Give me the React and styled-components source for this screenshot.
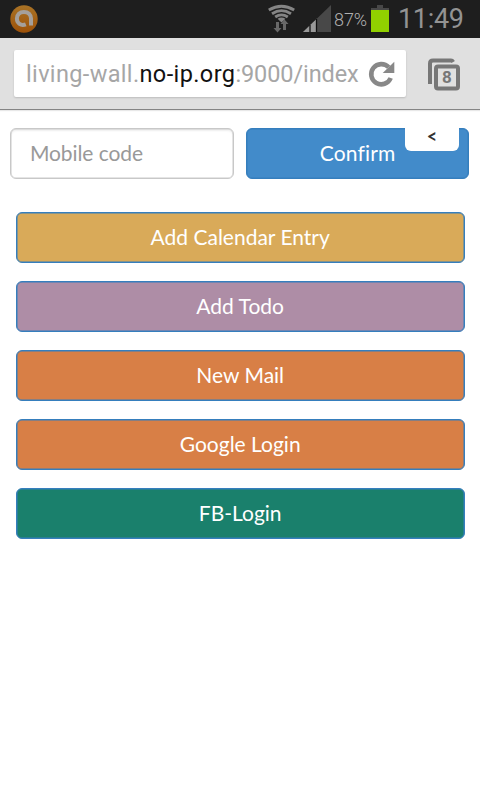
import React from "react";
import styled, { createGlobalStyle } from "styled-components";

const GlobalStyle = createGlobalStyle`
  * { box-sizing: border-box; }
  body { margin: 0; background: #fff; font-family: Lato, sans-serif; font-variant-ligatures: none; }
`;

const Screen = styled.div`
  width: 480px;
  height: 800px;
  overflow: hidden;
  background: #fff;
`;

const StatusBar = styled.header`
  display: flex;
  align-items: flex-start;
  height: 38px;
  padding: 0 15px 0 10px;
  background: #1e1e1e;
  color: #999;
  font-family: Roboto, sans-serif;
`;

const StatusIcon = styled.svg`
  flex: none;
  display: block;
  margin-left: ${(p) => p.$left || 0}px;
`;

const BatteryLevel = styled.span`
  flex: none;
  width: 34px;
  margin-left: 3px;
  padding-top: 9px;
  color: #b0b0b0;
  font-size: 18px;
  font-weight: 300;
  line-height: 22px;
  letter-spacing: -0.1px;
  white-space: nowrap;
`;

const Clock = styled.time`
  margin-left: 9px;
  padding-top: 2px;
  color: #939393;
  font-size: 27px;
  font-weight: 400;
  line-height: 34px;
  letter-spacing: -0.3px;
  white-space: nowrap;
`;

const BrowserBar = styled.div`
  display: flex;
  align-items: flex-start;
  height: 72px;
  padding: 12px 18px 0 14px;
  background: #e0e0e0;
  border-bottom: 1px solid #858585;
  box-shadow: 0 1px 1px #e8e8e8;
`;

const AddressField = styled.div`
  flex: none;
  display: flex;
  align-items: center;
  width: 392px;
  height: 47px;
  padding: 0 10px 0 12px;
  background: #fff;
  border-radius: 2px;
  box-shadow: 0 1px 2px #bbb;
`;

const Address = styled.span`
  flex: none;
  width: 341px;
  color: #a6a6a6;
  font: 400 23.5px/30px Roboto, sans-serif;
  letter-spacing: 0.35px;
  white-space: nowrap;
`;

const Host = styled.span`
  color: #111;
  letter-spacing: 0.4px;
`;

const UrlPath = styled.span`
  letter-spacing: -0.1px;
`;

const Page = styled.main`
  padding: 18px 10.5px 0 10.4px;
`;

const CodeForm = styled.form`
  position: relative;
  display: flex;
  gap: 12px;
`;

const CodeInput = styled.input`
  width: 223.5px;
  height: 51px;
  padding: 0 18px 2px 18.5px;
  border: 1.5px solid #c8c8c8;
  border-radius: 6px;
  outline: none;
  background: #fff;
  box-shadow: inset 0 0 0 0.5px #ccc, inset 0 2px 2px #eee;
  font: 21px/30px Lato, sans-serif;
  letter-spacing: -0.08px;

  &::placeholder { color: #999; opacity: 1; }
`;

const Button = styled.button`
  display: block;
  width: 100%;
  height: 51px;
  padding: 0 1px 2px 0;
  border: 1px solid #357ebd;
  border-radius: 6px;
  box-shadow: inset 0 0 0 0.5px #357ebd;
  background: ${(p) => p.$color};
  color: #fff;
  font: 21px/30px Lato, sans-serif;
  font-variant-ligatures: none;
`;

const ConfirmButton = styled(Button)`
  width: 223.5px;
  padding-right: 0;
  letter-spacing: 0.15px;
`;

const CollapseTab = styled.button`
  position: absolute;
  top: -3px;
  right: 10.5px;
  width: 54px;
  height: 25.5px;
  padding: 0 0 3px;
  border: 0;
  border-radius: 0 0 6px 6px;
  background: #fff;
  color: #333;
  font: 700 18px/22px Lato, sans-serif;
`;

const ActionList = styled.nav`
  display: grid;
  gap: 18px;
  margin-top: 33px;
  padding: 0 4.5px 0 6px;
`;

const actions = [
  { label: "Add Calendar Entry", color: "#d9aa59" },
  { label: "Add Todo", color: "#ae8da6" },
  { label: "New Mail", color: "#d87f46" },
  { label: "Google Login", color: "#d87f46" },
  { label: "FB-Login", color: "#1a806c" },
];

function AppLogo() {
  return (
    <StatusIcon width="28" height="38" viewBox="0 0 28 38">
      <defs>
        <linearGradient id="amber" x1="0" y1="0" x2="0" y2="1">
          <stop offset="0" stopColor="#a97326" />
          <stop offset="1" stopColor="#9d5108" />
        </linearGradient>
      </defs>
      <circle cx="14" cy="19" r="13.7" fill="url(#amber)" />
      <path d="M15.8 24.3C10.8 26.3 6.9 22.9 6.9 18.6C6.9 14.7 9.9 11.9 13.9 11.9C18.1 11.9 21 14.7 21 18.6V25.5" fill="none" stroke="#a5a09b" strokeWidth="4" />
    </StatusIcon>
  );
}

function WifiIcon() {
  return (
    <StatusIcon $left={230} width="27" height="38" viewBox="0 0 27 38">
      <g fill="none" stroke="#858585" strokeWidth="2.9">
        <path d="M.8 10Q13.5 2.4 26.2 10M4 13.7Q13.5 7.6 23 13.7M7.2 17Q13.5 12.8 19.8 17" />
      </g>
      <path d="M9.6 18.8Q13.5 16.2 17.4 18.8L13.5 22.5Z" fill="#858585" />
      <path d="M8 22h3v6h2.5l-4 4.4L5.5 28H8ZM15 30v-6h-2.5l4-4.5 4 4.5H18v6Z" fill="#686868" />
    </StatusIcon>
  );
}

function SignalIcon() {
  return (
    <StatusIcon $left={8} width="28" height="38" viewBox="0 0 28 38">
      <path d="M0 32L28 5V32Z" fill="#484848" />
      <path d="M0 32L14 18.5V32Z" fill="#999" />
      <path d="M7 25v7M13.5 19v13" stroke="#111" strokeWidth="1.3" />
    </StatusIcon>
  );
}

function BatteryIcon() {
  return (
    <StatusIcon $left={3} width="18" height="38" viewBox="0 0 18 38">
      <path d="M0 10V8h6V5h6v3h6v2Z" fill="#484848" />
      <path d="M0 10H18V32H0Z" fill="#91d000" />
    </StatusIcon>
  );
}

function ReloadIcon() {
  return (
    <svg width="28" height="28" viewBox="0 0 28 28">
      <path d="M21.7 7.3A10.1 10.1 0 1 0 23.7 18" fill="none" stroke="#888" strokeWidth="4.6" />
      <path d="M27.3 1.8V13H15.7Z" fill="#888" />
    </svg>
  );
}

function TabsIcon() {
  return (
    <StatusIcon $left={22} width="34" height="46" viewBox="0 0 34 46">
      <path d="M2 34V13.5Q2 10.5 5 10.5H23Q24.3 10.5 25.2 12" fill="none" stroke="#777" strokeWidth="4" />
      <rect x="8" y="16.5" width="22" height="22" rx="2" fill="#e0e0e0" stroke="#777" strokeWidth="4" />
      <text x="19" y="33" textAnchor="middle" fontFamily="Roboto, sans-serif" fontWeight="700" fontSize="17" fill="#777">8</text>
    </StatusIcon>
  );
}

export default function App() {
  return (
    <Screen>
      <GlobalStyle />
      <StatusBar>
        <AppLogo />
        <WifiIcon />
        <SignalIcon />
        <BatteryLevel>87%</BatteryLevel>
        <BatteryIcon />
        <Clock>11:49</Clock>
      </StatusBar>
      <BrowserBar>
        <AddressField>
          <Address>living-wall.<Host>no-ip.org</Host><UrlPath>:9000/index</UrlPath></Address>
          <ReloadIcon />
        </AddressField>
        <TabsIcon />
      </BrowserBar>
      <Page>
        <CodeForm>
          <CodeInput placeholder="Mobile code" />
          <ConfirmButton type="button" $color="#428bca">Confirm</ConfirmButton>
          <CollapseTab type="button">&lt;</CollapseTab>
        </CodeForm>
        <ActionList>
          {actions.map((action) => (
            <Button key={action.label} type="button" $color={action.color}>{action.label}</Button>
          ))}
        </ActionList>
      </Page>
    </Screen>
  );
}
